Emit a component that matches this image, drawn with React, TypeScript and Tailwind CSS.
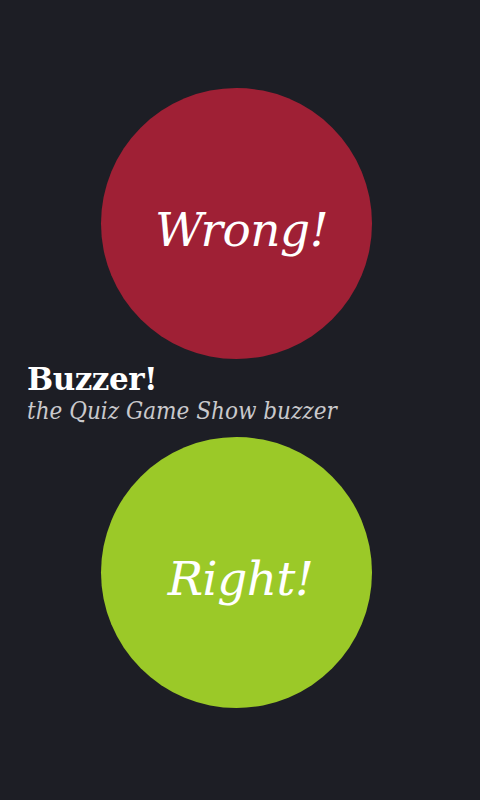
export default function App() {
  return (
    <div className="w-[480px] h-[800px] bg-[#1d1e25] flex flex-col overflow-hidden" style={{ fontFamily: '"DejaVu Serif", serif' }}>
      <div className="h-[88px]" />
      <div className="flex justify-center pr-[7px]">
        <button className="w-[271px] h-[271px] rounded-full bg-[#9f2035] flex items-center justify-center pl-[10px] pt-[12px]">
          <span className="text-white italic text-[47px] leading-none tracking-[-0.5px]">Wrong!</span>
        </button>
      </div>
      <div className="pl-[27px] mt-[2px]">
        <h1 className="text-white font-bold text-[31px] leading-[36px] tracking-[-0.5px]">Buzzer!</h1>
        <p className="text-[#c9c9cc] italic text-[24px] leading-[28px]" style={{ fontFamily: '"DejaVu Serif Condensed", "DejaVu Serif", serif', fontWeight: 200 }}>the Quiz Game Show buzzer</p>
      </div>
      <div className="flex justify-center pr-[7px] mt-[12px]">
        <button className="w-[271px] h-[271px] rounded-full bg-[#9bc928] flex items-center justify-center pl-[8px] pt-[12px]">
          <span className="text-white italic text-[47px] leading-none tracking-[-0.5px]">Right!</span>
        </button>
      </div>
    </div>
  );
}
